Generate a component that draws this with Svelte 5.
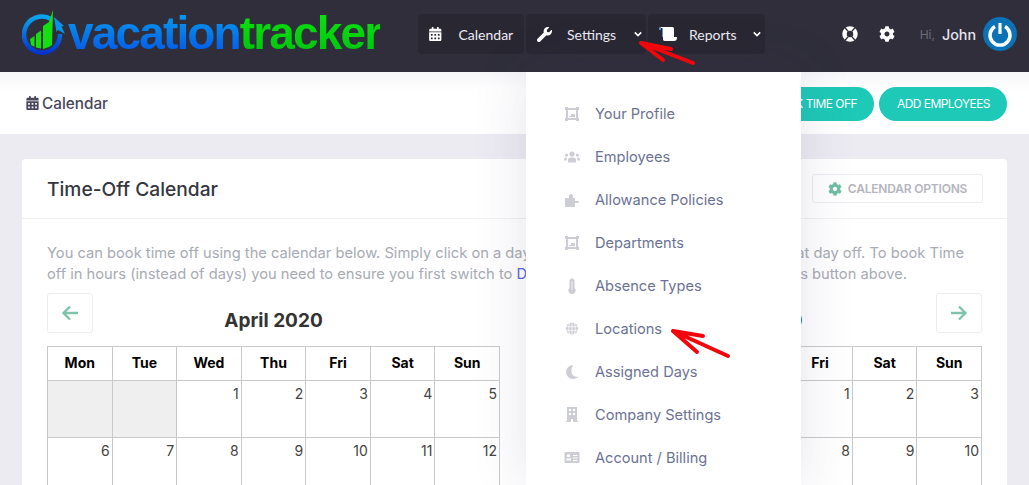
<script lang="ts">
  const settingsMenu = [
    { label: 'Your Profile', icon: 'frame' },
    { label: 'Employees', icon: 'users' },
    { label: 'Allowance Policies', icon: 'puzzle' },
    { label: 'Departments', icon: 'frame' },
    { label: 'Absence Types', icon: 'thermo' },
    { label: 'Locations', icon: 'globe' },
    { label: 'Assigned Days', icon: 'moon' },
    { label: 'Company Settings', icon: 'building' },
    { label: 'Account / Billing', icon: 'card' },
  ];

  const weekdays = ['Mon', 'Tue', 'Wed', 'Thu', 'Fri', 'Sat', 'Sun'];

  const months = [
    { title: 'April 2020', offset: 2, days: 30, arrow: 'left' },
    { title: 'May 2020', offset: 4, days: 31, arrow: 'right' },
  ];

  function weeksOf(offset: number, days: number) {
    const cells: (number | null)[] = [];
    for (let i = 0; i < offset; i++) cells.push(null);
    for (let d = 1; d <= days; d++) cells.push(d);
    while (cells.length % 7) cells.push(null);
    const rows = [];
    for (let i = 0; i < cells.length; i += 7) rows.push(cells.slice(i, i + 7));
    return rows;
  }

  const calendarPath = 'M0 464c0 26.5 21.5 48 48 48h352c26.5 0 48-21.5 48-48V192H0v272zm320-196c0-6.6 5.4-12 12-12h40c6.6 0 12 5.4 12 12v40c0 6.6-5.4 12-12 12h-40c-6.6 0-12-5.4-12-12v-40zm0 128c0-6.6 5.4-12 12-12h40c6.6 0 12 5.4 12 12v40c0 6.6-5.4 12-12 12h-40c-6.6 0-12-5.4-12-12v-40zM192 268c0-6.6 5.4-12 12-12h40c6.6 0 12 5.4 12 12v40c0 6.6-5.4 12-12 12h-40c-6.6 0-12-5.4-12-12v-40zm0 128c0-6.6 5.4-12 12-12h40c6.6 0 12 5.4 12 12v40c0 6.6-5.4 12-12 12h-40c-6.6 0-12-5.4-12-12v-40zM64 268c0-6.6 5.4-12 12-12h40c6.6 0 12 5.4 12 12v40c0 6.6-5.4 12-12 12H76c-6.6 0-12-5.4-12-12v-40zm0 128c0-6.6 5.4-12 12-12h40c6.6 0 12 5.4 12 12v40c0 6.6-5.4 12-12 12H76c-6.6 0-12-5.4-12-12v-40zM400 64h-48V16c0-8.8-7.2-16-16-16h-32c-8.8 0-16 7.2-16 16v48H160V16c0-8.8-7.2-16-16-16h-32c-8.8 0-16 7.2-16 16v48H48C21.5 64 0 85.5 0 112v48h448v-48c0-26.5-21.5-48-48-48z';
  const wrenchPath = 'M507.73 109.1c-2.24-9.03-13.54-12.09-20.12-5.51l-74.36 74.36-67.88-11.31-11.31-67.88 74.36-74.36c6.62-6.62 3.43-17.9-5.66-20.16-47.38-11.74-99.55.91-136.58 37.93-39.64 39.64-50.55 97.1-34.05 147.2L18.74 402.76c-24.99 24.99-24.99 65.51 0 90.5 24.99 24.99 65.51 24.99 90.5 0l213.21-213.21c50.12 16.71 107.47 5.68 147.37-34.22 37.07-37.07 49.7-89.32 37.91-136.73z';
  const gearPath = 'M487.4 315.7l-42.6-24.6c4.3-23.2 4.3-47 0-70.2l42.6-24.6c4.9-2.8 7.1-8.6 5.5-14-11.1-35.6-30-67.8-54.7-94.6-3.8-4.1-10-5.1-14.8-2.3L380.8 110c-17.9-15.4-38.5-27.3-60.8-35.1V25.8c0-5.6-3.9-10.5-9.4-11.7-36.7-8.2-74.3-7.8-109.2 0-5.5 1.2-9.4 6.1-9.4 11.7V75c-22.2 7.9-42.8 19.8-60.8 35.1L88.7 85.5c-4.9-2.8-11-1.9-14.8 2.3-24.7 26.7-43.6 58.9-54.7 94.6-1.7 5.4.6 11.2 5.5 14L67.3 221c-4.3 23.2-4.3 47 0 70.2l-42.6 24.6c-4.9 2.8-7.1 8.6-5.5 14 11.1 35.6 30 67.8 54.7 94.6 3.8 4.1 10 5.1 14.8 2.3l42.6-24.6c17.9 15.4 38.5 27.3 60.8 35.1v49.2c0 5.6 3.9 10.5 9.4 11.7 36.7 8.2 74.3 7.8 109.2 0 5.5-1.2 9.4-6.1 9.4-11.7v-49.2c22.2-7.9 42.8-19.8 60.8-35.1l42.6 24.6c4.9 2.8 11 1.9 14.8-2.3 24.7-26.7 43.6-58.9 54.7-94.6 1.5-5.5-.7-11.3-5.6-14.1zM256 336c-44.1 0-80-35.9-80-80s35.9-80 80-80 80 35.9 80 80-35.9 80-80 80z';
</script>

<div class="page">
  <header class="topbar">
    <div class="logo">
      <svg class="logo-mark" viewBox="0 0 46 58" width="46" height="58">
        <defs>
          <linearGradient id="ring" x1="0" y1="0" x2="0" y2="1">
            <stop offset="0" stop-color="#0aa4ee" />
            <stop offset="1" stop-color="#0434cc" />
          </linearGradient>
        </defs>
        <path d="M29 12a18 18 0 1 0 9 15" fill="none" stroke="url(#ring)" stroke-width="4.5" />
        <path d="M32 10l10 9-2.500.5L43 27l-7-4-1.500 2z" fill="#0a92e8" />
        <path d="M8 32l4.500-3v11L9 38zM14 27l5-3.500v18L14 40.500zM21 19l6-4v25l-6 2z" fill="#14e00e" />
        <path d="M27 15L31 3l-1 35-3 2z" fill="#14e00e" />
      </svg>
      <span class="logo-text"><span class="blue">vacation</span><span class="green">tracker</span></span>
    </div>

    <nav class="nav">
      <div class="nav-btn cal">
        <svg viewBox="0 0 448 512" width="12.500" height="14"><path d={calendarPath} fill="#fff" /></svg>
        <span>Calendar</span>
      </div>
      <div class="nav-btn set">
        <svg viewBox="0 0 512 512" width="15" height="15"><path d={wrenchPath} fill="#fff" /></svg>
        <span>Settings</span>
        <svg class="chev" viewBox="0 0 10 6" width="8" height="6"><polyline points="1,1 5,5 9,1" /></svg>
      </div>
      <div class="nav-btn rep">
        <svg viewBox="0 0 18 15" width="18" height="15"><path d="M1 0h12c2 0 2 1 2 2v8h3c0 3-1 4-3 4H6c-2 0-2-1-2-3V3C4 2 4 1 3 1H1z" fill="#fff" /><path d="M0 1c0-1 1-1 2-1v3H0zM3 1h1v9H3z" fill="#5f90d0" /></svg>
        <span>Reports</span>
        <svg class="chev" viewBox="0 0 10 6" width="8" height="6"><polyline points="1,1 5,5 9,1" /></svg>
      </div>
    </nav>

    <div class="top-right">
      <svg class="ring-icon" viewBox="0 0 16 16" width="16" height="16">
        <circle cx="8" cy="8" r="5.500" fill="none" stroke="#fff" stroke-width="4.500" />
        <path d="M3 1.800l3.200 3.600M13 1.800L9.800 5.400M3 14.200l3.200-3.600M13 14.200l-3.200-3.600" stroke="#2f2e3a" stroke-width="1.400" />
      </svg>
      <svg class="gear-icon" viewBox="0 0 512 512" width="16" height="16"><path d={gearPath} fill="#fff" /></svg>
      <span class="hi">Hi,</span>
      <span class="name">John</span>
      <span class="avatar">
        <svg viewBox="0 0 34 34" width="34" height="34">
          <circle cx="17" cy="17" r="17" fill="#0b72b5" />
          <path d="M12 9.500a10 10 0 1 0 10 0" fill="none" stroke="#fff" stroke-width="3.400" />
          <rect x="15.400" y="6" width="3.200" height="11" fill="#fff" />
        </svg>
      </span>
    </div>
  </header>

  <div class="subheader">
    <div class="crumb">
      <svg viewBox="0 0 448 512" width="13" height="14"><path d={calendarPath} fill="#48465b" /></svg>
      <span>Calendar</span>
    </div>
    <div class="actions">
      <span class="pill">BOOK TIME OFF</span>
      <span class="pill">ADD EMPLOYEES</span>
    </div>
  </div>

  <main class="content">
    <section class="card">
      <div class="card-head">
        <h2>Time-Off Calendar</h2>
        <div class="options">
          <svg viewBox="0 0 512 512" width="14" height="14"><path d={gearPath} fill="#6fbfa6" /></svg>
          <span>CALENDAR OPTIONS</span>
        </div>
      </div>

      <div class="card-body">
        <div class="intro">
          <p>
            <span>You can book time off using the calendar below. Simply click on a day</span>
            <span>to book that day off. To book Time</span>
          </p>
          <p class="short">
            <span>off in hours (instead of days) you need to ensure you first switch to <a href="#top">Detailed</a></span>
            <span>using the options button above.</span>
          </p>
        </div>

        <div class="months">
          {#each months as month}
            <div class="month">
              <div class="month-head">
                {#if month.arrow === 'left'}
                  <div class="arrow-btn">
                    <svg viewBox="0 0 18 16" width="18" height="16"><path d="M9 1.500L2.500 8 9 14.500M3 8h14" /></svg>
                  </div>
                {:else}
                  <span></span>
                {/if}
                <h3>{month.title}</h3>
                {#if month.arrow === 'right'}
                  <div class="arrow-btn">
                    <svg viewBox="0 0 18 16" width="18" height="16"><path d="M9 1.500L15.500 8 9 14.500M15 8H1" /></svg>
                  </div>
                {/if}
              </div>
              <table>
                <thead>
                  <tr>
                    {#each weekdays as day}
                      <th>{day}</th>
                    {/each}
                  </tr>
                </thead>
                <tbody>
                  {#each weeksOf(month.offset, month.days) as week}
                    <tr>
                      {#each week as d}
                        <td class:blank={d === null}>{d ?? ''}</td>
                      {/each}
                    </tr>
                  {/each}
                </tbody>
              </table>
            </div>
          {/each}
        </div>
      </div>
    </section>
  </main>

  <!-- settings dropdown, open over the page -->
  <ul class="menu">
    {#each settingsMenu as item}
      <li>
        <span class="menu-icon">
          {#if item.icon === 'frame'}
            <svg viewBox="0 0 14 14" width="14" height="14"><path d="M0 0h3v1h8V0h3v3h-1v8h1v3h-3v-1H3v1H0v-3h1V3H0zM3 3v8h8V3zM6 7h4v3H4V9h2z" fill-rule="evenodd" /></svg>
          {:else if item.icon === 'users'}
            <svg viewBox="0 0 16 12" width="16" height="12"><circle cx="8" cy="3" r="2.600" /><circle cx="2.600" cy="4" r="1.600" /><circle cx="13.400" cy="4" r="1.600" /><path d="M4 11.500V9c0-2 1.500-2.600 4-2.600s4 .6 4 2.600v2.500zM0 9c0-2 1-2.600 3-2.600-.4 1-.5 1.500-.5 3H0zM16 9c0-2-1-2.600-3-2.600.4 1 .5 1.500.5 3H16z" /></svg>
          {:else if item.icon === 'puzzle'}
            <svg viewBox="0 0 14 14" width="14" height="14"><path d="M0 5h4V3c0-1 .5-2 2-2s2 1 2 2v2h2v3h2.500c1 0 1.500.5 1.500 1s-.5 1-1.500 1H10v4H0z" /></svg>
          {:else if item.icon === 'thermo'}
            <svg viewBox="0 0 8 16" width="8" height="16"><path d="M1.500 3a2.500 2.500 0 0 1 5 0v7a3.500 3.500 0 1 1-5 0z" /><path d="M3.300 3h1.400v9h-1.400z" fill="#fff" opacity=".5" /></svg>
          {:else if item.icon === 'globe'}
            <svg viewBox="0 0 14 14" width="13" height="13"><circle cx="7" cy="7" r="6.500" /><path d="M0 5h14M0 9h14M7 0v14M4.500 1C3 5 3 9 4.500 13M9.500 1c1.500 4 1.500 8 0 12" fill="none" stroke="#fff" stroke-width=".8" /></svg>
          {:else if item.icon === 'moon'}
            <svg viewBox="0 0 14 14" width="13" height="14"><path d="M8 0a7 7 0 1 0 5.500 11.500C8 12.500 4 8 8 0z" /></svg>
          {:else if item.icon === 'building'}
            <svg viewBox="0 0 12 15" width="11" height="15"><path d="M1 0h10v14h1v1H7v-3H5v3H0v-1h1zM3 2v2h2V2zm4 0v2h2V2zM3 6v2h2V6zm4 0v2h2V6z" fill-rule="evenodd" /></svg>
          {:else}
            <svg viewBox="0 0 15 11" width="15" height="11"><path d="M1 0h13c.6 0 1 .4 1 1v9c0 .6-.4 1-1 1H1c-.6 0-1-.4-1-1V1c0-.6.4-1 1-1zm1.500 2.500v2.500h3V2.500zM2 8.500h4.500V6.500H2zM8.500 3v1H13V3zm0 2.500v1H13v-1zm0 2.500v1H13V8z" fill-rule="evenodd" /></svg>
          {/if}
        </span>
        <span>{item.label}</span>
      </li>
    {/each}
  </ul>

  <!-- red annotation arrows drawn over the screenshot -->
  <svg class="marks" viewBox="0 0 1029 485" width="1029" height="485">
    <path d="M693 63L641 43M641 43L671 49M641 43L663 60" />
    <path d="M728 356L673 331M673 331L703 336M673 331L697 352" />
  </svg>
</div>

<style>
  :global(body) {
    margin: 0;
    overflow: hidden;
  }

  .page {
    position: relative;
    width: 1029px;
    height: 485px;
    overflow: hidden;
    background: #ecebf2;
    font-family: Inter, "Open Sans", sans-serif;
  }

  /* Top bar */
  .topbar {
    height: 72px;
    background: #2f2e3a;
    display: flex;
    align-items: center;
    box-sizing: border-box;
    padding-left: 22px;
  }
  .logo {
    width: 396px;
    display: flex;
    align-items: center;
  }
  .logo-text {
    font-family: "Liberation Sans", Arial, sans-serif;
    font-weight: 700;
    font-size: 46px;
    letter-spacing: -1.85px;
    line-height: 50px;
    margin-top: -6px;
  }
  .blue, .green {
    -webkit-background-clip: text;
    background-clip: text;
    color: transparent;
  }
  .blue { background-image: linear-gradient(#07a6ee, #0450e8); }
  .green { background-image: linear-gradient(#08e80c, #00c010); }

  .nav { display: flex; gap: 2px; margin-top: -4px; }
  .nav-btn {
    height: 40px;
    background: #282732;
    border-radius: 4px;
    display: flex;
    align-items: center;
    box-sizing: border-box;
    padding: 0 4px 0 11px;
    font-family: Lato, sans-serif;
    font-size: 14px;
    color: #ecebf2;
  }
  .nav-btn span { flex: 1; }
  .nav-btn.cal { width: 106px; }
  .nav-btn.cal span { margin-left: 17px; }
  .nav-btn.set { width: 120px; }
  .nav-btn.set span { margin-left: 15px; }
  .nav-btn.rep { width: 117px; }
  .nav-btn.rep span { margin-left: 12px; }
  .chev polyline {
    fill: none;
    stroke: #fff;
    stroke-width: 2;
  }

  .top-right {
    margin-left: auto;
    margin-top: -4px;
    display: flex;
    align-items: center;
    padding-right: 12px;
  }
  .gear-icon { margin-left: 21px; }
  .hi {
    margin-left: 25px;
    font-size: 12px;
    color: #6c6a7d;
  }
  .name {
    margin-left: 7px;
    font-size: 14.3px;
    font-weight: 500;
    color: #e6e6ee;
  }
  .avatar { margin-left: 7px; display: flex; }

  /* Sub header */
  .subheader {
    height: 62px;
    background: linear-gradient(#f6f6f9, #fff 30%);
    display: flex;
    align-items: center;
    justify-content: space-between;
    padding: 0 22px 0 26px;
  }
  .crumb {
    display: flex;
    align-items: center;
    gap: 3px;
    font-size: 15.3px;
    font-weight: 500;
    color: #48465b;
  }
  .actions { display: flex; gap: 5px; margin-top: 1px; }
  .pill {
    height: 34px;
    line-height: 34px;
    padding: 0 17px 0 18px;
    border-radius: 17px;
    background: #1ec9b7;
    color: #fff;
    font-size: 12px;
    letter-spacing: -0.55px;
    white-space: nowrap;
  }

  /* Card */
  .content { padding: 25px 22px 0; }
  .card {
    background: #fff;
    border-radius: 4px;
  }
  .card-head {
    height: 60px;
    box-sizing: border-box;
    border-bottom: 1px solid #f0f0f4;
    display: flex;
    align-items: center;
    justify-content: space-between;
    padding: 0 24px 0 25px;
  }
  h2 {
    margin: 0;
    font-size: 19.2px;
    font-weight: 500;
    color: #36363f;
  }
  .options {
    height: 29px;
    width: 171px;
    box-sizing: border-box;
    border: 1px solid #ebedf2;
    border-radius: 3px;
    display: flex;
    align-items: center;
    justify-content: center;
    gap: 6px;
    font-size: 12px;
    font-weight: 600;
    letter-spacing: -0.2px;
    color: #b5b5c0;
  }
  .card-body { padding: 24px 25px 0; }
  .intro {
    height: 50px;
    font-size: 14.7px;
    line-height: 21px;
    color: #a7abb3;
    white-space: nowrap;
  }
  .intro p {
    margin: 0;
    width: 917px;
    display: flex;
    justify-content: space-between;
  }
  .intro p.short { width: 860px; }
  .intro a { color: #5867dd; text-decoration: none; }

  .months { display: flex; gap: 29px; }
  .month { width: 453px; }
  .month-head {
    height: 53px;
    display: grid;
    grid-template-columns: 46px 1fr 46px;
  }
  .arrow-btn {
    width: 46px;
    height: 40px;
    box-sizing: border-box;
    border: 1px solid #ebedf2;
    border-radius: 3px;
    display: flex;
    align-items: center;
    justify-content: center;
  }
  .arrow-btn path {
    fill: none;
    stroke: #7fc4aa;
    stroke-width: 2.4;
  }
  h3 {
    margin: 0 0 12px;
    align-self: end;
    text-align: center;
    font-size: 19px;
    font-weight: 700;
    line-height: 26px;
    color: #333;
  }

  table {
    width: 453px;
    table-layout: fixed;
    border-collapse: collapse;
  }
  th, td {
    border: 1px solid #c9c9c9;
    padding: 0;
  }
  th {
    height: 34px;
    padding-bottom: 2px;
    box-sizing: border-box;
    font-size: 14px;
    font-weight: 700;
    color: #000;
  }
  td {
    height: 57px;
    padding: 3px 2px 0 0;
    box-sizing: border-box;
    text-align: right;
    vertical-align: top;
    font-size: 14px;
    line-height: 20px;
    color: #444;
  }
  td.blank { background: #efefef; }

  /* Dropdown */
  .menu {
    position: absolute;
    left: 526px;
    top: 72px;
    width: 275px;
    height: 413px;
    box-sizing: border-box;
    margin: 0;
    padding: 20px 0 0;
    list-style: none;
    background: #fff;
    box-shadow: 0 0 50px rgba(82, 63, 105, 0.15);
  }
  .menu li {
    height: 43px;
    display: flex;
    align-items: center;
    font-size: 14.6px;
    color: #6c7293;
  }
  .menu-icon {
    width: 69px;
    padding-left: 38px;
    box-sizing: border-box;
    display: flex;
    justify-content: flex-start;
    fill: #cdcdd6;
  }
  .menu-icon svg { width: 16px; }

  .marks {
    position: absolute;
    left: 0;
    top: 0;
    pointer-events: none;
  }
  .marks path {
    fill: none;
    stroke: #f2060c;
    stroke-width: 4;
    stroke-linecap: round;
  }
</style>
